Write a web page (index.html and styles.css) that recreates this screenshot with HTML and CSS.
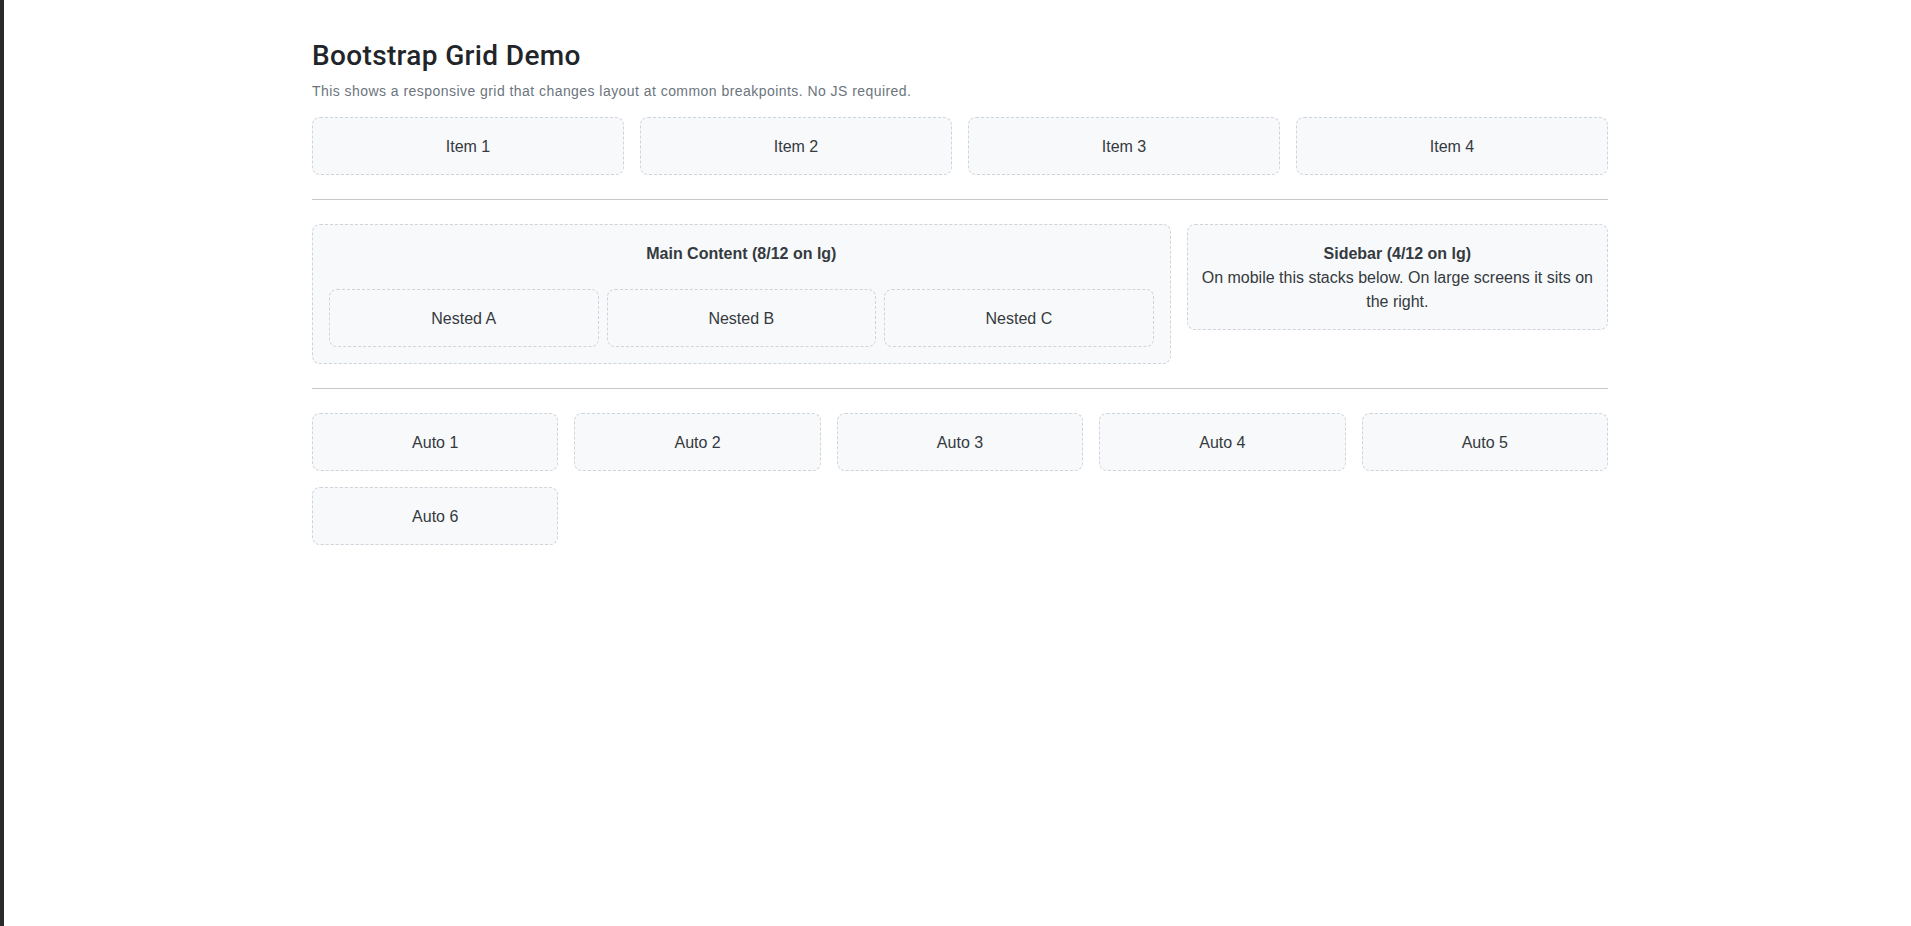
FILE: index.html
```html
<!DOCTYPE html>
<html lang="en">
<head>
<meta charset="utf-8">
<title>Bootstrap Grid Demo</title>
<link rel="stylesheet" href="styles.css">
</head>
<body>
<main class="container">
  <h3 class="title">Bootstrap Grid Demo</h3>
  <p class="lead-note">This shows a responsive grid that changes layout at common breakpoints. No JS required.</p>

  <div class="grid grid-4">
    <div class="box">Item 1</div>
    <div class="box">Item 2</div>
    <div class="box">Item 3</div>
    <div class="box">Item 4</div>
  </div>

  <hr class="divider">

  <div class="grid grid-main">
    <div class="box">
      <div class="box-title">Main Content (8/12 on lg)</div>
      <div class="grid grid-nested">
        <div class="box">Nested A</div>
        <div class="box">Nested B</div>
        <div class="box">Nested C</div>
      </div>
    </div>
    <div class="box box-side">
      <div class="box-heading">Sidebar (4/12 on lg)</div>
      <div>On mobile this stacks below. On large screens it sits on the right.</div>
    </div>
  </div>

  <hr class="divider">

  <div class="grid grid-5">
    <div class="box">Auto 1</div>
    <div class="box">Auto 2</div>
    <div class="box">Auto 3</div>
    <div class="box">Auto 4</div>
    <div class="box">Auto 5</div>
    <div class="box">Auto 6</div>
  </div>
</main>
</body>
</html>
```

FILE: styles.css
```css
* {
  box-sizing: border-box;
}

html, body {
  margin: 0;
}

body {
  min-height: 100vh;
  border-left: 4px solid #2a2a2a;
  padding-left: 5px;
  background: #ffffff;
  color: #212529;
  font-family: "Liberation Sans", Arial, sans-serif;
  font-size: 16px;
  line-height: 1.5;
}

.container {
  width: 1296px;
  margin: 0 auto;
  padding-top: 39px;
}

.title {
  margin: 0 0 8px;
  font-family: Roboto, "Liberation Sans", Arial, sans-serif;
  font-size: 28px;
  font-weight: 500;
  line-height: 1.2;
  letter-spacing: 0.35px;
  color: #212529;
}

.lead-note {
  margin: 0 0 15px;
  font-size: 14px;
  line-height: 21px;
  letter-spacing: 0.45px;
  color: #6c757d;
}

.grid {
  display: grid;
  gap: 16px;
}

.grid-4 {
  grid-template-columns: repeat(4, 1fr);
}

.grid-5 {
  grid-template-columns: repeat(5, 1fr);
}

.grid-main {
  grid-template-columns: calc((100% + 16px) * 8 / 12 - 16px) 1fr;
  align-items: start;
}

.grid-nested {
  grid-template-columns: repeat(3, 1fr);
  gap: 8px;
}

.box {
  padding: 17px 16px 15px;
  border: 1px dashed #ced4da;
  border-radius: 8px;
  background: #f8f9fa;
  color: #343a40;
  text-align: center;
  line-height: 24px;
}

.box-side {
  padding-left: 12px;
  padding-right: 12px;
}

.box-title {
  font-weight: 700;
  margin-bottom: 23px;
}

.grid-nested .box {
  margin-bottom: 1px;
}

.box-heading {
  font-weight: 700;
}

.divider {
  margin: 24px 0;
  border: 0;
  border-top: 1px solid #c8c9ca;
  height: 0;
}
```
